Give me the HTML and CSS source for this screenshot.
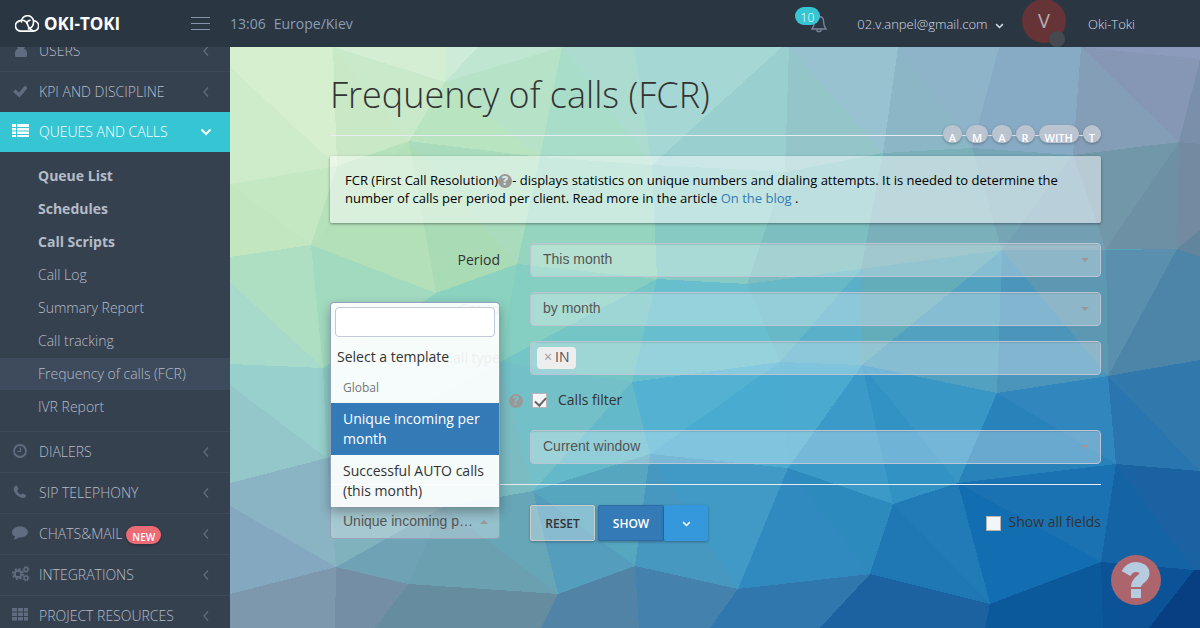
FILE: index.html
```
<!DOCTYPE html>
<html lang="en">
<head>
	<meta charset="utf-8">
	<meta name="viewport" content="width=device-width, initial-scale=1">
	<title>Frequency of calls (FCR)</title>
	<link rel="stylesheet" href="styles.css">
</head>
<body>
	<!-- icons used in the menu -->
	<svg class="sprite" aria-hidden="true">
		<symbol id="i-left" viewBox="0 0 8 12"><path d="M6 1.500L2 6l4 4.500" fill="none" stroke="currentColor" stroke-width="1.300"/></symbol>
		<symbol id="i-down" viewBox="0 0 12 8"><path d="M1.500 1.500L6 6l4.500-4.500" fill="none" stroke="currentColor" stroke-width="2"/></symbol>
	</svg>

	<!-- HEADER -->
	<header class="header">
		<div class="brand">
			<a href="#" class="logo">
				<svg width="24" height="18" viewBox="0 0 24 18" fill="none" stroke="#fff" stroke-width="1.600" stroke-linecap="round">
					<path d="M6 5.500a5.300 5.300 0 0 0-.5 10.600h12.500a5.200 5.200 0 0 0 .8-10.400"/>
					<path d="M6.500 7a6 5.800 0 0 1 12-1c.3 4-2.200 7-5 8"/>
					<path d="M3 6.800c4-3 8.500-1 9.500 2.500.8 3 2.500 5.500 5.500 6.500"/>
					<path d="M12 8.500c0-2 1.500-3 3-3.300"/>
				</svg>
				<span>OKI-TOKI</span>
			</a>
			<button class="toggler" aria-label="Toggle menu"><i></i><i></i><i></i></button>
		</div>
		<div class="clock"><span>13:06</span><span>Europe/Kiev</span></div>
		<div class="top-menu">
			<a href="#" class="bell" aria-label="Notifications">
				<svg width="16" height="18" viewBox="0 0 16 18" fill="none" stroke="#76869b" stroke-width="1.300">
					<path d="M8 1.500c-3.200 0-4.600 2.300-4.600 5 0 4-.9 5.700-2.400 7.500h14c-1.500-1.800-2.400-3.500-2.400-7.500 0-2.700-1.400-5-4.600-5zM8 0v1.500M5.800 14.500a2.200 2.200 0 0 0 4.400 0"/>
				</svg>
				<span class="count">10</span>
			</a>
			<a href="#" class="user">02.v.anpel@gmail.com <svg width="9" height="6"><use href="#i-down"/></svg></a>
			<span class="avatar">V</span>
			<a href="#" class="company">Oki-Toki</a>
		</div>
	</header>

	<div class="page">
		<!-- SIDEBAR -->
		<nav class="sidebar">
			<ul class="menu">
				<li><a href="#">
					<svg class="ico" viewBox="0 0 18 16"><path d="M9 0a4 4 0 0 1 2.800 6.800C14.500 7.500 15 9.500 15 12v1.500q0 1.500-1.500 1.500h-9Q3 15 3 13.500V12c0-2.500.5-4.500 3.200-5.200A4 4 0 0 1 9 0z"/></svg>
					<span>USERS</span><svg class="arrow"><use href="#i-left"/></svg></a></li>
				<li><a href="#">
					<svg class="ico" viewBox="0 0 18 16"><path d="M1 9l2.500-2.500L7 9.500 13 2.500l2.500 2.500-8 9.500z"/></svg>
					<span>KPI AND DISCIPLINE</span><svg class="arrow"><use href="#i-left"/></svg></a></li>
				<li class="active"><a href="#">
					<svg class="ico" viewBox="0 0 18 16"><path d="M0 1h4v3H0zM5 1h12v3H5zM0 5h4v2.500H0zM5 5h12v2.500H5zM0 8.500h4V11H0zM5 8.500h12V11H5zM0 12h4v2H0zM5 12h12v2H5z"/></svg>
					<span>QUEUES AND CALLS</span><svg class="arrow open"><use href="#i-down"/></svg></a>
					<ul class="submenu">
						<li><a href="#"><b>Queue List</b></a></li>
						<li><a href="#"><b>Schedules</b></a></li>
						<li><a href="#"><b>Call Scripts</b></a></li>
						<li><a href="#">Call Log</a></li>
						<li><a href="#">Summary Report</a></li>
						<li><a href="#">Call tracking</a></li>
						<li class="current"><a href="#">Frequency of calls (FCR)</a></li>
						<li><a href="#">IVR Report</a></li>
					</ul>
				</li>
				<li><a href="#">
					<svg class="ico" viewBox="0 0 18 16"><g fill="none" stroke="currentColor"><circle cx="8" cy="8" r="6" stroke-width="1.800"/><path d="M8.500 4.500V8.500H5.500" stroke-width="1.200"/></g></svg>
					<span>DIALERS</span><svg class="arrow"><use href="#i-left"/></svg></a></li>
				<li><a href="#">
					<svg class="ico" viewBox="0 0 18 16"><path d="M3 2l1.800-.5L6.500 5 5 6.800c.8 1.800 2.200 3.200 4 4l1.500-1.600L14 11l-.5 2.300c-1.200 1-2.500 1-4 .4C5.500 12.300 2.500 9.500 1.800 6 1.400 4.500 2 3 3 2z"/></svg>
					<span>SIP TELEPHONY</span><svg class="arrow"><use href="#i-left"/></svg></a></li>
				<li><a href="#">
					<svg class="ico" viewBox="0 0 18 16"><path d="M8 1.500c4.500 0 8 2.500 8 5.500s-3.500 5.500-8 5.500l-1.500-.1C5 13.800 3.500 14.500 1.500 14.500c1-.9 1.500-1.800 1.500-3C1 10.500 0 9 0 7c0-3 3.500-5.500 8-5.500z"/></svg>
					<span>CHATS&amp;MAIL</span><em class="new">NEW</em><svg class="arrow"><use href="#i-left"/></svg></a></li>
				<li><a href="#">
					<svg class="ico" viewBox="0 0 18 16"><g fill="none" stroke="currentColor"><circle cx="6" cy="8" r="3.400" stroke-width="2.200"/><circle cx="6" cy="8" r="5.200" stroke-width="1.600" stroke-dasharray="2.040 2.040"/><circle cx="14" cy="3.500" r="2" stroke-width="1.500"/><circle cx="14" cy="3.500" r="3" stroke-width="1" stroke-dasharray="1.180 1.180"/><circle cx="14" cy="12" r="2" stroke-width="1.500"/><circle cx="14" cy="12" r="3" stroke-width="1" stroke-dasharray="1.180 1.180"/></g></svg>
					<span>INTEGRATIONS</span><svg class="arrow"><use href="#i-left"/></svg></a></li>
				<li><a href="#">
					<svg class="ico" viewBox="0 0 18 16"><path d="M0 1h5v3.500H0zM6 1h5v3.500H6zM12 1h4v3.500h-4zM0 5.500h5V9H0zM6 5.500h5V9H6zM12 5.500h4V9h-4zM0 10h5v3.500H0zM6 10h5v3.500H6zM12 10h4v3.500h-4z"/></svg>
					<span>PROJECT RESOURCES</span><svg class="arrow"><use href="#i-left"/></svg></a></li>
			</ul>
		</nav>

		<!-- CONTENT -->
		<main class="content">
			<svg class="mesh" viewBox="0 0 970 581" preserveAspectRatio="none" shape-rendering="crispEdges" aria-hidden="true">
				<path fill="#d6efcf" d="M0 0H103L107 119 0 20z"/>
				<path fill="#cfecca" d="M0 20L107 119 0 137z"/>
				<path fill="#d4eed3" d="M103 0H215V35z"/>
				<path fill="#c9e9cb" d="M103 0L215 35 179 94z"/>
				<path fill="#c9e9c6" d="M103 0L179 94 107 119z"/>
				<path fill="#cdecd8" d="M215 0H248L215 35z"/>
				<path fill="#bfe6d1" d="M248 0H332L215 35z"/>
				<path fill="#b6e3c8" d="M215 35L332 0 310 110z"/>
				<path fill="#b9e4c0" d="M215 35L310 110 179 94z"/>
				<path fill="#b5e1bb" d="M107 119L179 94 81 198z"/>
				<path fill="#b3e0b9" d="M179 94L206 246 81 198z"/>
				<path fill="#a9dcb5" d="M179 94L287 217 206 246z"/>
				<path fill="#a8dcbd" d="M179 94L310 110 287 217z"/>
				<path fill="#c4e8c2" d="M0 137L107 119 81 198z"/>
				<path fill="#c1e6c0" d="M0 137L81 198 0 210z"/>
				<path fill="#aedfc2" d="M0 210L81 198 93 321 0 235z"/>
				<path fill="#a7dacb" d="M0 235L93 321 0 317z"/>
				<path fill="#a2dac0" d="M81 198L206 246 93 321z"/>
				<path fill="#acdccf" d="M332 0H404L422 118z"/>
				<path fill="#a8ddc9" d="M332 0L422 118 310 110z"/>
				<path fill="#95d5bf" d="M310 110L422 118 427 232 287 217z"/>
				<path fill="#a5d8d4" d="M404 0H552L422 118z"/>
				<path fill="#99cfcf" d="M422 118L552 0H559L555 125z"/>
				<path fill="#86cac3" d="M422 118L555 125 517 237 427 232z"/>
				<path fill="#99c2d1" d="M559 0H668L653 106z"/>
				<path fill="#93c5c9" d="M559 0L653 106 555 125z"/>
				<path fill="#7dbfc0" d="M555 125L653 106 631 222 517 237z"/>
				<path fill="#8ab6c5" d="M668 0L742 101 653 106z"/>
				<path fill="#8eb4c9" d="M668 0H769L742 101z"/>
				<path fill="#88abc5" d="M769 0H851L843 108 742 101z"/>
				<path fill="#79b0b9" d="M653 106L742 101 772 203 631 222z"/>
				<path fill="#76a6b6" d="M742 101L843 108 772 203z"/>
				<path fill="#739fb3" d="M843 108L876 203H772z"/>
				<path fill="#7197a8" d="M843 108L949 95 876 203z"/>
				<path fill="#8c9bbb" d="M851 0H970V12z"/>
				<path fill="#8597b4" d="M851 0L970 12 949 95z"/>
				<path fill="#849eb7" d="M851 0L949 95 843 108z"/>
				<path fill="#7a90aa" d="M970 12V97L949 95z"/>
				<path fill="#728ba1" d="M949 95L970 97V183L947 202z"/>
				<path fill="#6e90a4" d="M949 95L947 202H876z"/>
				<path fill="#62849d" d="M970 183V210L947 202z"/>
				<path fill="#8bd2c0" d="M206 246L287 217 270 315 93 321z"/>
				<path fill="#84cfc1" d="M287 217L427 232 270 315z"/>
				<path fill="#74c5c5" d="M270 315L427 232 402 335z"/>
				<path fill="#97d0cc" d="M0 317L93 321 97 411 0 338z"/>
				<path fill="#94c7ca" d="M0 338L97 411 0 436z"/>
				<path fill="#8bcbc6" d="M93 321L270 315 97 411z"/>
				<path fill="#67bfcd" d="M427 232L517 237 550 315 402 335z"/>
				<path fill="#67b9c7" d="M517 237L631 222 550 315z"/>
				<path fill="#5bb0c9" d="M631 222L632 318 550 315z"/>
				<path fill="#63adbb" d="M631 222L772 203 632 318z"/>
				<path fill="#53a1c0" d="M772 203L767 346 632 318z"/>
				<path fill="#4c95ba" d="M772 203L878 329 767 346z"/>
				<path fill="#5c98b2" d="M772 203H876L878 329z"/>
				<path fill="#5a8fad" d="M876 203L947 202 878 329z"/>
				<path fill="#4c85a8" d="M947 202L970 210V313L878 329z"/>
				<path fill="#73c0c8" d="M270 315L402 335 303 444z"/>
				<path fill="#63b9ca" d="M402 335L420 407 303 444z"/>
				<path fill="#53b2d1" d="M402 335L550 315 420 407z"/>
				<path fill="#49abd0" d="M550 315L558 421 420 407z"/>
				<path fill="#4aaacf" d="M550 315L632 318 558 421z"/>
				<path fill="#3b9ac8" d="M632 318L663 457 558 421z"/>
				<path fill="#3292c4" d="M632 318L728 436 663 457z"/>
				<path fill="#3997c6" d="M632 318L767 346 728 436z"/>
				<path fill="#3187bd" d="M767 346L878 329 886 417z"/>
				<path fill="#2983bb" d="M767 346L886 417 728 436z"/>
				<path fill="#3179ac" d="M878 329L970 313V424z"/>
				<path fill="#2975b0" d="M878 329L970 424 886 417z"/>
				<path fill="#8ab4c3" d="M0 436L97 411 106 520 0 459z"/>
				<path fill="#85a8c1" d="M0 459L106 520 0 547z"/>
				<path fill="#80b2bd" d="M97 411L213 460 106 520z"/>
				<path fill="#7bbcc2" d="M97 411L270 315 303 444 213 460z"/>
				<path fill="#67a6b7" d="M213 460L303 444 328 547z"/>
				<path fill="#6fa2b4" d="M213 460L178 537 106 520z"/>
				<path fill="#6ba0b1" d="M213 460L328 547 178 537z"/>
				<path fill="#7d97ad" d="M0 547L106 520 105 581H0z"/>
				<path fill="#738ea5" d="M106 520L178 537 145 581H105z"/>
				<path fill="#668c9f" d="M178 537L328 547 311 581H145z"/>
				<path fill="#559dbc" d="M303 444L405 519 328 547z"/>
				<path fill="#56a6bf" d="M303 444L420 407 405 519z"/>
				<path fill="#4798c1" d="M420 407L508 542 405 519z"/>
				<path fill="#409ac5" d="M420 407L558 421 508 542z"/>
				<path fill="#5083a5" d="M328 547L405 519 409 581H311z"/>
				<path fill="#4482ad" d="M405 519L508 542 480 581H409z"/>
				<path fill="#2f77ad" d="M508 542L640 527 590 581H480z"/>
				<path fill="#3089bf" d="M558 421L640 527 508 542z"/>
				<path fill="#2c8abd" d="M558 421L663 457 640 527z"/>
				<path fill="#1f77b4" d="M663 457L760 557 640 527z"/>
				<path fill="#207bb6" d="M663 457L728 436 760 557z"/>
				<path fill="#1a72b2" d="M728 436L886 417 871 515z"/>
				<path fill="#136eb1" d="M728 436L871 515 760 557z"/>
				<path fill="#1a62a1" d="M886 417L970 424V523L964 523z"/>
				<path fill="#1463a4" d="M886 417L964 523 871 515z"/>
				<path fill="#1c62a0" d="M640 527L760 557 755 581H590z"/>
				<path fill="#0b589b" d="M760 557L871 515 873 581H755z"/>
				<path fill="#0b5296" d="M871 515L964 523 919 581H873z"/>
				<path fill="#083f82" d="M964 523H970V581H919z"/>
			</svg>

			<div class="title">
				<h1>Frequency of calls (FCR)</h1>
				<div class="letters"><span>A</span><span>M</span><span>A</span><span>R</span><span>WITH</span><span>T</span></div>
			</div>

			<div class="note">
				FCR (First Call Resolution)<span class="hint">?</span>- displays statistics on unique numbers and dialing attempts. It is needed to determine the number of calls per period per client. Read more in the article <a href="#">On the blog</a> .
			</div>

			<form class="filter">
				<div class="row">
					<label for="period">Period</label>
					<div class="pick"><select id="period"><option>This month</option></select></div>
				</div>
				<div class="row">
					<label for="group">Group</label>
					<div class="pick"><select id="group"><option>by month</option></select></div>
				</div>
				<div class="row">
					<label for="calltype">Call type</label>
					<div class="tags">
						<span class="tag"><button type="button" aria-label="Remove IN">×</button>IN</span>
						<input type="text" id="calltype">
					</div>
				</div>
				<div class="row check-row">
					<div class="check">
						<span class="hint">?</span>
						<input type="checkbox" id="calls" checked>
						<label for="calls">Calls filter</label>
					</div>
				</div>
				<div class="row">
					<div class="pick last"><select aria-label="Open in"><option>Current window</option></select></div>
				</div>

				<div class="row actions">
					<div class="pick template">
						<select aria-label="Template"><option>Unique incoming per month</option></select>
						<div class="dropdown">
							<input type="text" aria-label="Search template">
							<ul>
								<li class="empty">Select a template</li>
								<li class="group">Global</li>
								<li class="option selected">Unique incoming per month</li>
								<li class="option">Successful AUTO calls (this month)</li>
							</ul>
						</div>
					</div>
					<div class="buttons">
						<button type="reset" class="btn reset">RESET</button>
						<button type="button" class="btn show">SHOW</button>
						<button type="button" class="btn more" aria-label="More"><svg width="9" height="6"><use href="#i-down"/></svg></button>
						<div class="check all">
							<input type="checkbox" id="all">
							<label for="all">Show all fields</label>
						</div>
					</div>
				</div>
			</form>
		</main>
	</div>

	<button class="help" aria-label="Help">
		<svg width="30" height="38" viewBox="0 0 30 38" fill="none" stroke="#b5cbe0">
			<path d="M5 12.500C7.500 8 10.500 6 15 6c5 0 8.500 2.500 8.500 6.500 0 6-8.500 5.500-8.500 13.500" stroke-width="10"/>
			<path d="M15 28v9" stroke-width="10"/>
		</svg>
	</button>
</body>
</html>
```

FILE: styles.css
```
* {
	box-sizing: border-box;
}

body {
	margin: 0;
	height: 100vh;
	overflow: hidden;
	display: flex;
	flex-direction: column;
	font-family: "Open Sans", "Noto Sans", sans-serif;
	font-size: 14px;
	line-height: 20px;
	color: #333;
}

a {
	text-decoration: none;
	color: #337ab7;
}

ul {
	list-style: none;
	margin: 0;
	padding: 0;
}

button, input, select {
	font: inherit;
	margin: 0;
}

.sprite {
	position: absolute;
	width: 0;
	height: 0;
}

/* header */
.header {
	flex: none;
	display: flex;
	align-items: center;
	height: 47px;
	padding-right: 65px;
	background: #2b3643;
	position: relative;
	z-index: 5;
}

.brand {
	width: 230px;
	padding: 0 20px 0 15px;
	display: flex;
	align-items: center;
	justify-content: space-between;
}

.logo {
	display: flex;
	align-items: center;
	gap: 5px;
	color: #fff;
	font-size: 17px;
	font-weight: 700;
}

.toggler {
	display: flex;
	flex-direction: column;
	gap: 5px;
	padding: 0;
	border: 0;
	background: none;
}

.toggler i {
	width: 19px;
	height: 1px;
	background: #8395ab;
}

.clock {
	display: flex;
	gap: 8px;
	color: #8a9db5;
}

.top-menu {
	margin-left: auto;
	display: flex;
	align-items: center;
	font-size: 13px;
	font-weight: 300;
}

.top-menu a {
	color: #d3dbe5;
}

.bell {
	position: relative;
	margin-right: 30px;
	display: flex;
}

.count {
	position: absolute;
	right: 7px;
	top: -8px;
	height: 18px;
	padding: 2px 6px 0;
	border-radius: 9px;
	background: #36c6d3;
	color: #fff;
	font-size: 12px;
	line-height: 18px;
}

.user svg {
	margin-left: 4px;
}

.avatar {
	position: relative;
	width: 44px;
	height: 44px;
	margin: -5px 22px 0 18px;
	border-radius: 50%;
	background: #663337;
	color: #b5adb2;
	font-size: 20px;
	font-weight: 400;
	line-height: 44px;
	text-align: center;
}

.avatar::after {
	content: "";
	position: absolute;
	right: 1px;
	bottom: -4px;
	width: 16px;
	height: 16px;
	border-radius: 50%;
	background: #444a50;
}

.page {
	flex: 1;
	display: flex;
	min-height: 0;
}

/* sidebar */
.sidebar {
	flex: none;
	width: 230px;
	overflow: hidden;
	background: #364150;
	font-weight: 300;
}

/* the list is scrolled a bit under the header */
.menu {
	margin-top: -17px;
}

.menu > li > a {
	display: flex;
	align-items: center;
	height: 41px;
	padding: 0 20px 0 12px;
	border-top: 1px solid #3d4957;
	color: #b4bcc8;
}

.menu > li.active > a {
	height: 40px;
	border: 0;
	background: #36c6d3;
	color: #fff;
}

.ico {
	width: 18px;
	height: 16px;
	margin: 0 9px 2px 0;
	fill: currentColor;
	color: #606c7f;
}

.active .ico {
	color: #fff;
}

.arrow {
	width: 8px;
	height: 12px;
	margin-left: auto;
	color: #606c7f;
}

.arrow.open {
	width: 12px;
	height: 8px;
	margin-right: -2px;
	color: #fff;
}

.new {
	height: 18px;
	margin: 1px 0 0 4px;
	padding: 0 6px;
	border-radius: 9px;
	background: #ed6b75;
	box-shadow: 0 1px 3px rgba(0, 0, 0, .3);
	color: #fff;
	font-size: 10px;
	font-style: normal;
	font-weight: 600;
	line-height: 23px;
}

.submenu {
	padding: 8px 0 7px;
}

.submenu li {
	margin-bottom: 1px;
}

.submenu a {
	display: block;
	padding: 6px 0 6px 38px;
	color: #b4bcc8;
}

.submenu b {
	font-weight: 700;
}

.submenu .current {
	background: #3e4b5c;
}

/* content */
.content {
	flex: 1;
	min-width: 0;
	position: relative;
	z-index: 0;
	padding: 24px 99px 0 100px;
	background: linear-gradient(150deg, #d6efcf, #74c0c5 50%, #0b5296);
}

.mesh {
	position: absolute;
	left: 0;
	top: 0;
	width: 100%;
	height: 100%;
	z-index: -1;
}

.title {
	position: relative;
	padding-bottom: 16px;
	border-bottom: 1px solid #e7ecf1;
}

h1 {
	margin: 0;
	font-size: 36px;
	font-weight: 300;
	line-height: 48px;
}

.letters {
	position: absolute;
	right: 0;
	bottom: -8px;
	display: flex;
	gap: 4px;
}

.letters span {
	height: 18px;
	padding: 0 6px;
	border-radius: 9px;
	background: #bac3d0;
	box-shadow: 0 1px 3px rgba(0, 0, 0, .3);
	color: #fff;
	font-size: 11px;
	font-weight: 600;
	line-height: 25px;
	text-align: center;
}

.note {
	margin: 20px 0;
	padding: 15px 15px 16px;
	border-radius: 2px;
	background: rgba(255, 255, 255, .5);
	box-shadow: 0 1px 3px rgba(0, 0, 0, .4);
	color: #000;
	font-size: 13px;
	line-height: 18px;
}

.hint {
	display: inline-block;
	width: 14px;
	height: 14px;
	border-radius: 50%;
	background: #999;
	color: #d8e8e0;
	font-size: 12px;
	font-weight: 800;
	line-height: 14px;
	text-align: center;
}

/* form */
.filter {
	display: flex;
	flex-direction: column;
	gap: 15px;
}

.row {
	display: grid;
	grid-template-columns: 170px 1fr;
	column-gap: 30px;
}

.row > label {
	padding-top: 7px;
	text-align: right;
}

.pick {
	position: relative;
}

.pick.last, .check {
	grid-column: 2;
}

.pick::after {
	content: "";
	position: absolute;
	right: 12px;
	top: 15px;
	border: 4px solid transparent;
	border-top-color: #999;
	border-bottom: 0;
}

.pick select, .tags {
	display: block;
	width: 100%;
	height: 34px;
	padding: 0 24px 2px 12px;
	border: 1px solid #bcc5d6;
	border-radius: 4px;
	background: rgba(255, 255, 255, .3);
	box-shadow: inset 0 1px 1px rgba(0, 0, 0, .1);
	color: #555;
	font-family: "Liberation Sans", Arial, sans-serif;
	appearance: none;
	text-overflow: ellipsis;
}

.tags {
	display: flex;
	align-items: center;
	padding: 0 6px;
}

.tag {
	height: 22px;
	padding: 0 7px;
	border-radius: 4px;
	background: #eee;
	font-family: "Open Sans", sans-serif;
	line-height: 20px;
}

.tag button {
	padding: 0 3px 0 0;
	border: 0;
	background: none;
	color: #999;
}

.tags input {
	flex: 1;
	min-width: 0;
	border: 0;
	outline: 0;
	background: none;
}

.check {
	display: flex;
}

.check-row {
	height: 25px;
}

.check-row .hint {
	margin: 4px 9px 0 -21px;
	color: #7cbcc0;
}

.check input {
	appearance: none;
	width: 15px;
	height: 15px;
	margin: 3px 0 0;
	border: 1px solid #b5b5b5;
	background: #f2f6f9;
}

.check input:checked::after {
	content: "";
	display: block;
	width: 9px;
	height: 5px;
	margin: 3px 0 0 2px;
	border: solid #666;
	border-width: 0 0 2px 2px;
	transform: rotate(-48deg);
}

.check label {
	margin-left: 11px;
}

.actions {
	margin-top: 5px;
	padding-top: 20px;
	border-top: 1px solid #e7ecf1;
}

.template select {
	border-color: #93a1bb;
}

.template::after {
	border-top: 0;
	border-bottom: 4px solid #999;
}

.dropdown {
	position: absolute;
	left: 0;
	right: 0;
	bottom: 34px;
	z-index: 2;
	border: 1px solid #93a1bb;
	border-bottom: 0;
	border-radius: 4px 4px 0 0;
	background: rgba(255, 255, 255, .92);
	box-shadow: 0 5px 12px rgba(0, 0, 0, .3);
}

.dropdown input {
	display: block;
	width: calc(100% - 8px);
	height: 30px;
	margin: 4px;
	padding: 4px;
	border: 1px solid #c2cad8;
	border-radius: 4px;
	background: #fff;
}

.dropdown .empty {
	padding: 6px;
}

.dropdown .group {
	padding: 5px 12px;
	color: #777;
	font-size: 12px;
}

.dropdown .option {
	padding: 6px 12px;
}

.dropdown .selected {
	background: #337ab7;
	color: #fff;
}

.buttons {
	display: flex;
}

.btn {
	height: 36px;
	padding-top: 3px;
	border: 0;
	border-radius: 2px;
	box-shadow: 0 1px 3px rgba(0, 0, 0, .3);
	font-size: 12px;
	font-weight: 600;
}

.reset {
	width: 65px;
	margin-right: 3px;
	border: 1px solid #ccc;
	background: rgba(255, 255, 255, .3);
	color: #333;
}

.show {
	width: 66px;
	border: 1px solid #2e6da4;
	background: #337ab7;
	color: #fff;
}

.more {
	width: 44px;
	padding-top: 0;
	background: #3598dc;
	color: #fff;
}

.all {
	margin: 7px 0 0 auto;
}

.all input {
	margin-top: 4px;
}

.all label {
	margin-left: 7px;
}

.help {
	position: fixed;
	right: 39px;
	bottom: 23px;
	z-index: 6;
	display: flex;
	align-items: center;
	justify-content: center;
	width: 50px;
	height: 50px;
	padding: 0;
	border: 0;
	border-radius: 50%;
	background: #ad656d;
}
```
